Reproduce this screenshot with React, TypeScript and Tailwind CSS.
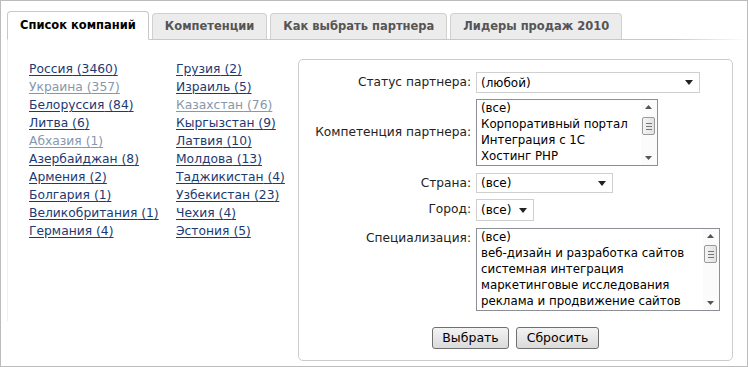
import React from 'react';

type Country = { name: string; count: number; muted?: boolean };

const leftCountries: Country[] = [
  { name: 'Россия', count: 3460 },
  { name: 'Украина', count: 357, muted: true },
  { name: 'Белоруссия', count: 84 },
  { name: 'Литва', count: 6 },
  { name: 'Абхазия', count: 1, muted: true },
  { name: 'Азербайджан', count: 8 },
  { name: 'Армения', count: 2 },
  { name: 'Болгария', count: 1 },
  { name: 'Великобритания', count: 1 },
  { name: 'Германия', count: 4 },
];

const rightCountries: Country[] = [
  { name: 'Грузия', count: 2 },
  { name: 'Израиль', count: 5 },
  { name: 'Казахстан', count: 76, muted: true },
  { name: 'Кыргызстан', count: 9 },
  { name: 'Латвия', count: 10 },
  { name: 'Молдова', count: 13 },
  { name: 'Таджикистан', count: 4 },
  { name: 'Узбекистан', count: 23 },
  { name: 'Чехия', count: 4 },
  { name: 'Эстония', count: 5 },
];

const tabs = ['Список компаний', 'Компетенции', 'Как выбрать партнера', 'Лидеры продаж 2010'];

function CountryColumn({ items, width }: { items: Country[]; width: string }) {
  return (
    <ul className={width}>
      {items.map((c) => (
        <li key={c.name} className="h-[18px] leading-[18px]">
          <a
            href="#"
            className={
              'underline underline-offset-2 ' + (c.muted ? 'text-[#8797ac]' : 'text-[#1d3a72]')
            }
          >
            {c.name} ({c.count})
          </a>
        </li>
      ))}
    </ul>
  );
}

function Dropdown({ value, className }: { value: string; className: string }) {
  return (
    <div
      className={
        'flex items-center justify-between border border-[#cfcfcf] bg-white pl-[4px] pr-[6px] text-[12px] text-black ' +
        className
      }
    >
      <span>{value}</span>
      <svg width="8" height="5" viewBox="0 0 8 5">
        <path d="M0 0h8L4 5z" fill="#222" />
      </svg>
    </div>
  );
}

function ListBox({ items, className, thumbTop }: { items: string[]; className: string; thumbTop: number }) {
  return (
    <div className={'flex border border-[#8c9096] bg-white ' + className}>
      <div className="flex-1 overflow-hidden pl-[4px] text-[11.8px] leading-[16px] text-black">
        {items.map((i) => (
          <div key={i} className="whitespace-nowrap">
            {i}
          </div>
        ))}
      </div>
      <div className="relative w-[16px] bg-[#fbfbfb]">
        <svg className="absolute left-[4px] top-[5px]" width="7" height="4" viewBox="0 0 7 4">
          <path d="M0 4L3.5 0L7 4z" fill="#555" />
        </svg>
        <div
          className="absolute left-[1px] flex h-[18px] w-[13px] flex-col items-center justify-center gap-[2px] rounded-[2px] border border-[#9a9a9a] bg-gradient-to-r from-[#f4f4f4] to-[#e2e2e2]"
          style={{ top: thumbTop }}
        >
          <div className="h-px w-[6px] bg-[#777]" />
          <div className="h-px w-[6px] bg-[#777]" />
          <div className="h-px w-[6px] bg-[#777]" />
        </div>
        <svg className="absolute bottom-[5px] left-[4px]" width="7" height="4" viewBox="0 0 7 4">
          <path d="M0 0h7L3.5 4z" fill="#555" />
        </svg>
      </div>
    </div>
  );
}

export default function App() {
  return (
    <div className="h-[367px] w-[748px] overflow-hidden border border-[#bcbcbc] bg-white font-['DejaVu_Sans',sans-serif] text-[12px]">
      {/* tabs */}
      <div className="pl-[6px] pt-[10px]">
        <div className="flex items-end gap-[3px]">
          {tabs.map((t, i) =>
            i === 0 ? (
              <div
                key={t}
                className="relative z-10 -mb-px flex h-[29px] items-center rounded-t-[4px] border border-b-white border-[#c8c8c8] bg-white px-[12px] text-[11.5px] font-bold text-black"
              >
                {t}
              </div>
            ) : (
              <div
                key={t}
                className="flex h-[26px] items-center rounded-t-[4px] border border-b-0 border-[#d0d0d0] bg-[#ececec] px-[12px] pt-px text-[11.5px] font-bold text-[#555]"
              >
                {t}
              </div>
            ),
          )}
        </div>
        <div className="h-px bg-gradient-to-r from-[#c8c8c8] via-[#c8c8c8] via-90% to-white" />
      </div>

      {/* body */}
      <div className="flex pl-[6px]">
        <div className="flex h-[281px] border-l border-[#f0f0f0] pl-[21px] pt-[20px] text-[12.3px]">
          <CountryColumn items={leftCountries} width="w-[147px]" />
          <CountryColumn items={rightCountries} width="w-[115px]" />
        </div>

        <div className="ml-[7px] mt-[19px] h-[302px] w-[435px] rounded-[5px] border border-[#cccccc] pt-[12px] text-[12.2px] text-[#222]">
          <div className="grid grid-cols-[172px_1fr] gap-x-[5px] gap-y-[6px]">
            <div className="flex items-center justify-end">Статус партнера:</div>
            <Dropdown value="(любой)" className="h-[21px] w-[224px]" />

            <div className="flex items-center justify-end">Компетенция партнера:</div>
            <ListBox
              className="h-[67px] w-[182px]"
              thumbTop={17}
              items={['(все)', 'Корпоративный портал', 'Интеграция с 1С', 'Хостинг PHP']}
            />

            <div className="mt-px flex items-center justify-end">Страна:</div>
            <Dropdown value="(все)" className="mt-px h-[20px] w-[137px]" />

            <div className="flex justify-end pt-px">Город:</div>
            <Dropdown value="(все)" className="h-[22px] w-[58px]" />

            <div className="mt-px flex justify-end pt-px">Специализация:</div>
            <ListBox
              className="mt-px h-[83px] w-[244px]"
              thumbTop={16}
              items={[
                '(все)',
                'веб-дизайн и разработка сайтов',
                'системная интеграция',
                'маркетинговые исследования',
                'реклама и продвижение сайтов',
              ]}
            />
          </div>

          <div className="mt-[16px] flex justify-center gap-[7px]">
            <button className="h-[22px] w-[77px] rounded-[3px] border border-[#707070] bg-gradient-to-b from-[#f3f3f3] to-[#dadada] text-[12.5px] text-black">
              Выбрать
            </button>
            <button className="h-[22px] w-[83px] rounded-[3px] border border-[#707070] bg-gradient-to-b from-[#f3f3f3] to-[#dadada] text-[12.5px] text-black">
              Сбросить
            </button>
          </div>
        </div>
      </div>
    </div>
  );
}
